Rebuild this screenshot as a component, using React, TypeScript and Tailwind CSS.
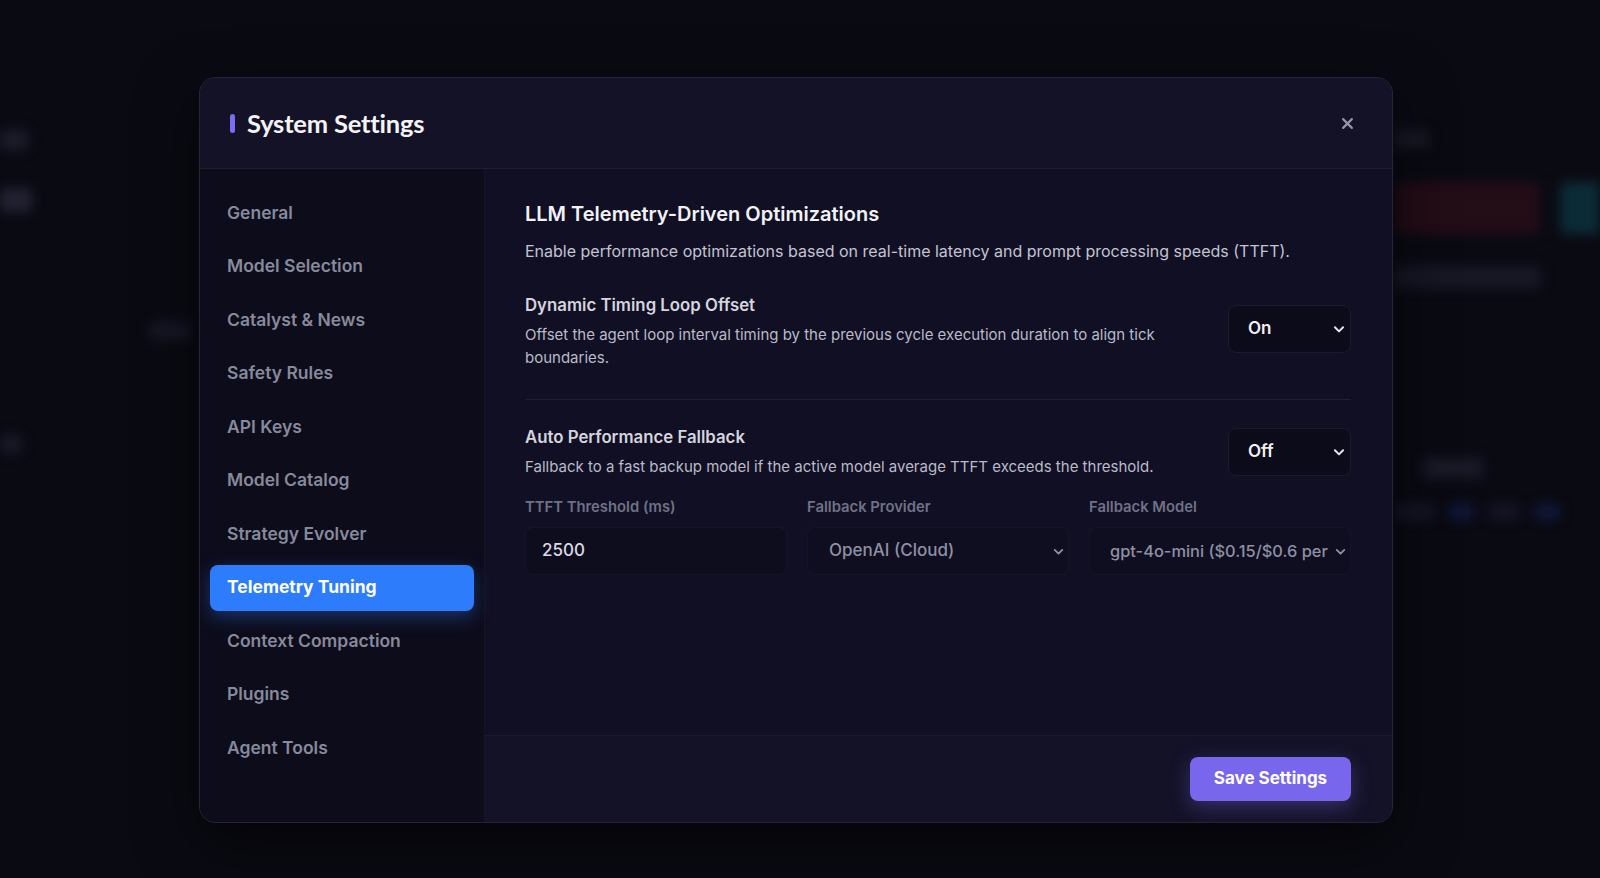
import React from "react";

const navItems = [
  "General",
  "Model Selection",
  "Catalyst & News",
  "Safety Rules",
  "API Keys",
  "Model Catalog",
  "Strategy Evolver",
  "Telemetry Tuning",
  "Context Compaction",
  "Plugins",
  "Agent Tools",
];

function Chevron({ className, size = 13 }: { className?: string; size?: number }) {
  return (
    <svg width={size} height={size} viewBox="0 0 24 24" fill="none" className={className}>
      <path d="M5 9l7 7 7-7" stroke="currentColor" strokeWidth="3.4" strokeLinecap="round" strokeLinejoin="round" />
    </svg>
  );
}

function SmallSelect({ value }: { value: string }) {
  return (
    <div className="flex h-[48px] w-[123px] shrink-0 items-center justify-between rounded-lg border border-[#1b1a2e] bg-[#0c0b19] pl-[19px] pr-[4px] text-[17px] font-semibold text-[#f1f1f5]">
      <span>{value}</span>
      <Chevron className="text-[#e6e6ee]" size={14} />
    </div>
  );
}

export default function App() {
  return (
    <div
      className="relative h-[878px] w-[1600px] overflow-hidden bg-[#0a0a13]"
      style={{ fontFamily: "Inter, 'Noto Sans', sans-serif" }}
    >
      {/* blurred background app */}
      <div className="flex h-full w-full justify-between blur-[6px]">
        <div className="flex w-[199px] flex-col">
          <div className="mt-[130px] h-[20px] w-[28px] rounded bg-[#1c1c2a]" />
          <div className="mt-[38px] h-[24px] w-[32px] rounded bg-[#222232]" />
          <div className="ml-[150px] mt-[110px] h-[18px] w-[40px] rounded bg-[#181826]" />
          <div className="mt-[95px] h-[18px] w-[22px] rounded bg-[#1a1a28]" />
        </div>
        <div className="flex w-[207px] flex-col">
          <div className="mt-[130px] h-[18px] w-[36px] rounded bg-[#191926]" />
          <div className="mt-[34px] flex gap-[20px]">
            <div className="h-[52px] w-[148px] rounded-md bg-[#230d17]" />
            <div className="h-[52px] w-[40px] rounded-l-md bg-[#0b2c36]" />
          </div>
          <div className="mt-[32px] h-[22px] w-[148px] rounded bg-[#181826]" />
          <div className="ml-[30px] mt-[170px] h-[20px] w-[60px] rounded bg-[#1a1a28]" />
          <div className="mt-[26px] flex gap-[16px]">
            <div className="h-[16px] w-[40px] rounded bg-[#141624]" />
            <div className="h-[16px] w-[24px] rounded bg-[#10183a]" />
            <div className="h-[16px] w-[30px] rounded bg-[#141624]" />
            <div className="h-[16px] w-[24px] rounded bg-[#10183a]" />
          </div>
        </div>
      </div>

      {/* modal overlay */}
      <div className="absolute inset-0 pl-[199px] pt-[77px]">
        <div className="flex h-[746px] w-[1194px] flex-col overflow-hidden rounded-2xl border border-[#26243a] bg-[#110f24] shadow-[0_20px_60px_rgba(0,0,0,0.6)]">
          {/* header */}
          <div className="flex h-[91px] shrink-0 items-center justify-between border-b border-[#1f1d33] bg-[#141226] pl-[30px] pr-[34px]">
            <div className="flex items-center gap-[12px]">
              <div className="h-[19px] w-[5px] rounded-full bg-[#7b6cf6]" />
              <h1
                className="text-[25.5px] font-bold tracking-[-0.2px] text-[#f4f4f8]"
                style={{ fontFamily: "Lato, 'Noto Sans', sans-serif" }}
              >
                System Settings
              </h1>
            </div>
            <button className="flex h-[22px] w-[22px] items-center justify-center text-[#9597a8]">
              <svg width="15" height="15" viewBox="0 0 24 24" fill="none">
                <path d="M5 5l14 14M19 5L5 19" stroke="currentColor" strokeWidth="3.4" strokeLinecap="round" />
              </svg>
            </button>
          </div>

          {/* body */}
          <div className="flex min-h-0 flex-1">
            {/* sidebar */}
            <nav className="flex w-[285px] shrink-0 flex-col gap-[7.5px] border-r border-[#161428] bg-[#0d0c1b] px-[10px] pt-[21px]">
              {navItems.map((item) => {
                const active = item === "Telemetry Tuning";
                return (
                  <div
                    key={item}
                    className={
                      active
                        ? "flex h-[46px] items-center rounded-lg bg-[#2d7cfb] pl-[17px] text-[17.5px] font-bold text-white shadow-[0_6px_18px_rgba(45,124,251,0.35)]"
                        : "flex h-[46px] items-center rounded-lg pl-[17px] text-[17.5px] font-semibold text-[#868a9b]"
                    }
                  >
                    {item}
                  </div>
                );
              })}
            </nav>

            {/* content */}
            <div className="flex min-w-0 flex-1 flex-col">
              <div className="flex-1 pl-[40px] pr-[41px] pt-[32px]">
                <h2 className="text-[20px] font-semibold leading-[26px] text-[#f2f2f6]">
                  LLM Telemetry-Driven Optimizations
                </h2>
                <p className="mt-[12px] text-[16px] leading-[24px] text-[#c3c4d0]">
                  Enable performance optimizations based on real-time latency and prompt processing speeds (TTFT).
                </p>

                <div className="mt-[30px] flex items-center gap-6 border-b border-[#211f36] pb-[30px]">
                  <div className="min-w-0 flex-1">
                    <div className="text-[16.8px] font-semibold leading-[24px] text-[#d4d5de]">
                      Dynamic Timing Loop Offset
                    </div>
                    <p className="mt-[6px] text-[15px] leading-[23px] text-[#b9bbc8]">
                      Offset the agent loop interval timing by the previous cycle execution duration to align tick boundaries.
                    </p>
                  </div>
                  <div className="-mt-[4px]">
                    <SmallSelect value="On" />
                  </div>
                </div>

                <div className="mt-[25px] flex items-center gap-6">
                  <div className="min-w-0 flex-1">
                    <div className="text-[16.8px] font-semibold leading-[24px] text-[#d4d5de]">
                      Auto Performance Fallback
                    </div>
                    <p className="mt-[6px] text-[15px] leading-[23px] text-[#b9bbc8]">
                      Fallback to a fast backup model if the active model average TTFT exceeds the threshold.
                    </p>
                  </div>
                  <SmallSelect value="Off" />
                </div>

                <div className="mt-[19px] grid grid-cols-3 gap-x-[20px]">
                  <div className="flex flex-col">
                    <label className="text-[14.8px] font-semibold leading-[20px] text-[#6f7285]">TTFT Threshold (ms)</label>
                    <div className="mt-[10px] flex h-[48px] items-center rounded-lg border border-[#15142a] bg-[#0e0d1d] pl-[16px] text-[17px] font-medium text-[#d9d9e2]">
                      2500
                    </div>
                  </div>
                  <div className="flex flex-col">
                    <label className="text-[14.8px] font-semibold leading-[20px] text-[#6f7285]">Fallback Provider</label>
                    <div className="mt-[10px] flex h-[48px] items-center justify-between rounded-lg border border-[#15142a] bg-[#0f0e20] pl-[21px] pr-[3px] text-[17px] font-medium text-[#8e90a3]">
                      <span>OpenAI (Cloud)</span>
                      <Chevron className="text-[#8e90a3]" />
                    </div>
                  </div>
                  <div className="flex flex-col">
                    <label className="text-[14.8px] font-semibold leading-[20px] text-[#6f7285]">Fallback Model</label>
                    <div className="mt-[10px] flex h-[48px] items-center justify-between rounded-lg border border-[#15142a] bg-[#0f0e20] pl-[20px] pr-[3px] text-[16.4px] font-medium text-[#8e90a3]">
                      <span className="whitespace-nowrap">gpt-4o-mini ($0.15/$0.6 per</span>
                      <Chevron className="shrink-0 text-[#8e90a3]" />
                    </div>
                  </div>
                </div>
              </div>

              {/* footer */}
              <div className="flex h-[87px] shrink-0 items-center justify-end border-t border-[#1c1a30] bg-[#141227] pr-[41px]">
                <button className="flex h-[44px] w-[161px] items-center justify-center rounded-lg bg-[#7867ec] text-[17px] font-bold text-white shadow-[0_6px_20px_rgba(120,103,236,0.35)]">
                  Save Settings
                </button>
              </div>
            </div>
          </div>
        </div>
      </div>
    </div>
  );
}
